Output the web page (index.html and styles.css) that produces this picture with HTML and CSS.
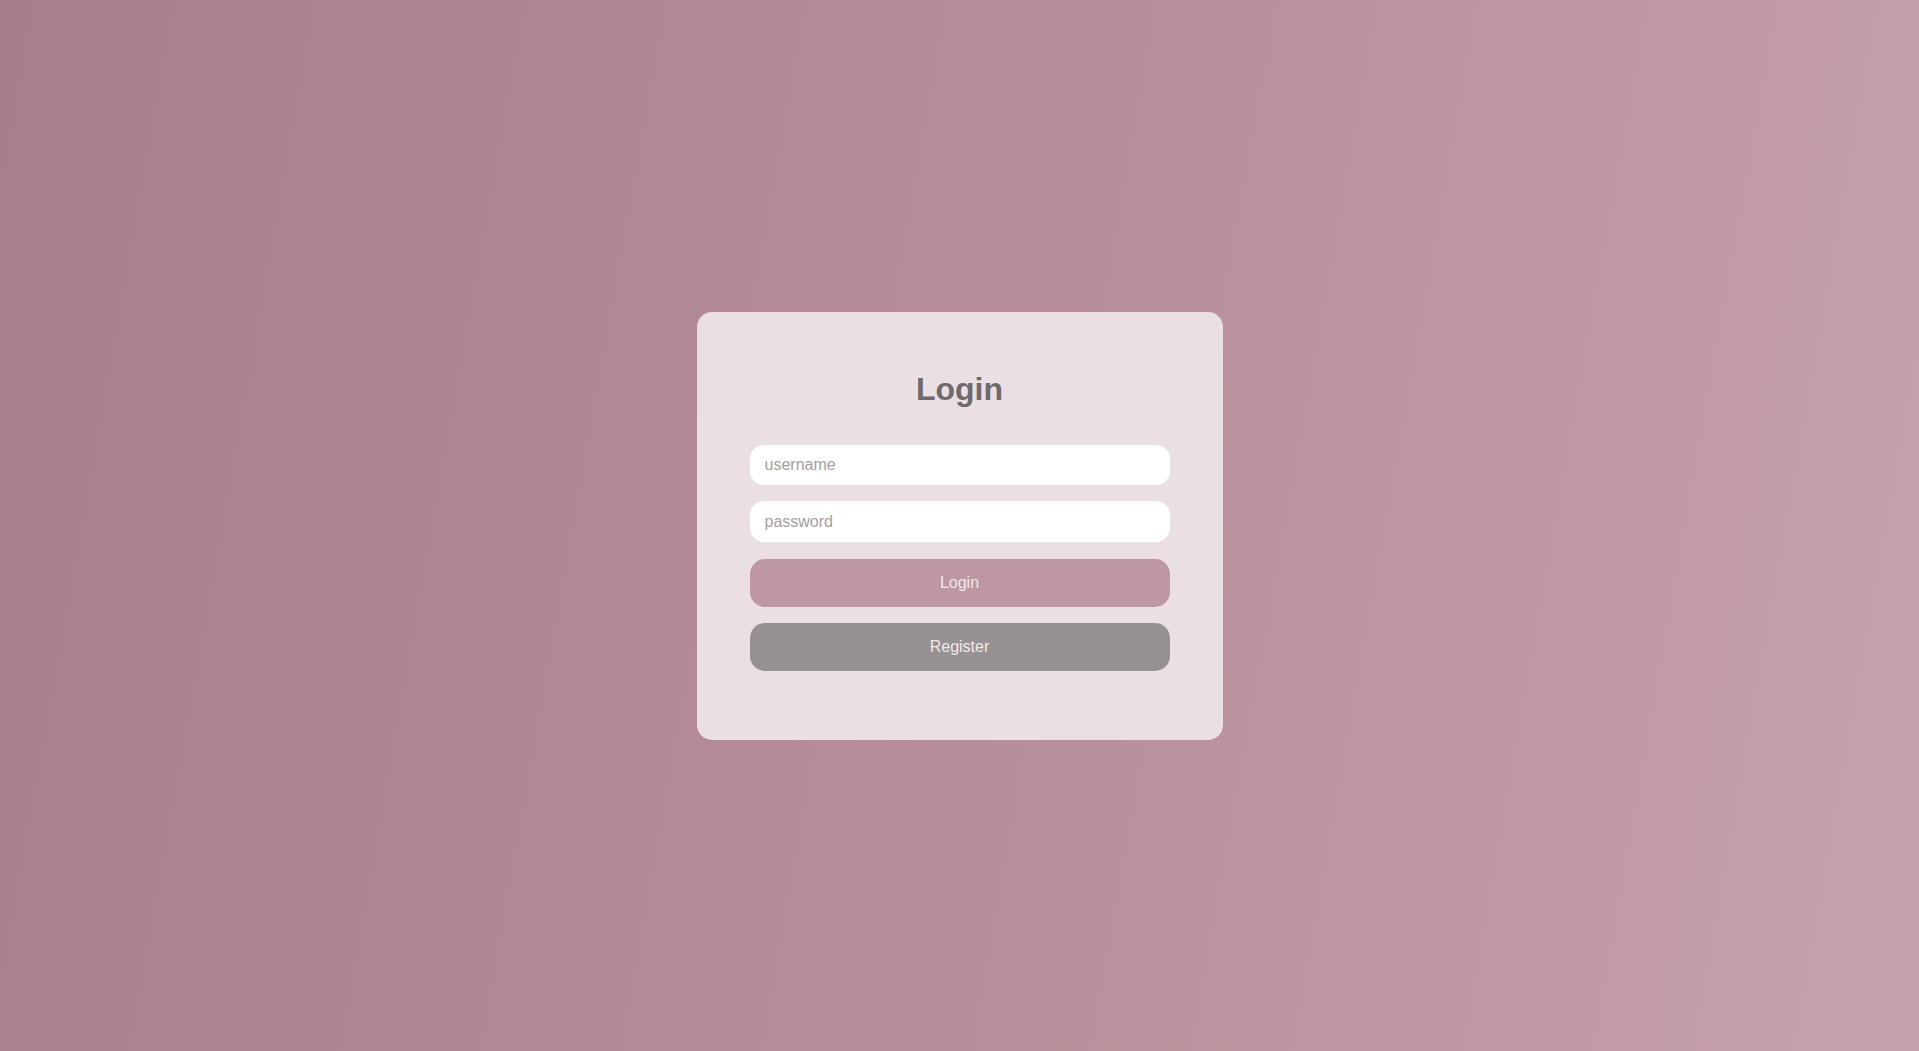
FILE: index.html
```html
<!DOCTYPE html>
<html lang="en">
<head>
<meta charset="utf-8">
<title>Login</title>
<link rel="stylesheet" href="styles.css">
</head>
<body>
<main class="page">
  <form class="card">
    <h2 class="title">Login</h2>
    <input class="field" type="text" placeholder="username">
    <input class="field" type="password" placeholder="password">
    <button class="btn btn-login" type="button">Login</button>
    <button class="btn btn-register" type="button">Register</button>
  </form>
</main>
</body>
</html>
```

FILE: styles.css
```css
* { box-sizing: border-box; }
html, body { margin: 0; height: 100%; }
body {
  font-family: "Liberation Sans", Arial, sans-serif;
  background: linear-gradient(100deg, #a97e8b 0%, #b68d98 50%, #c5a2ac 100%);
}
.page {
  height: 100%;
  display: flex;
  align-items: center;
  justify-content: center;
}
.card {
  width: 526px;
  height: 428px;
  background: #eae0e4;
  border-radius: 15px;
  padding: 59px 53px 53px;
  display: flex;
  flex-direction: column;
}
.title {
  margin: 0 0 37px;
  text-align: center;
  font-size: 32px;
  line-height: normal;
  font-weight: bold;
  color: #6e6a6b;
}
.field {
  height: 41px;
  border: none;
  outline: none;
  border-radius: 14px;
  background: #ffffff;
  padding: 0 15px;
  font-family: inherit;
  font-size: 16px;
  color: #555;
  margin-bottom: 16px;
}
.field::placeholder { color: #a3a0a1; }
.btn {
  height: 48px;
  border: none;
  border-radius: 15px;
  font-family: inherit;
  font-size: 16px;
  color: #f1e8ec;
  margin-bottom: 16px;
  cursor: pointer;
}
.btn-login { background: #bd97a1; margin-top: 1px; }
.btn-register { background: #969293; }
```
